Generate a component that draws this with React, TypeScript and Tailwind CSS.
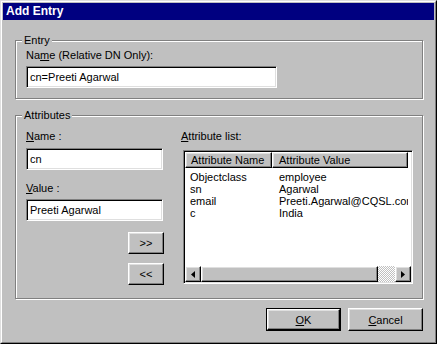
const raised =
  "border border-t-white border-l-white border-r-black border-b-black shadow-[inset_-1px_-1px_0_#808080,inset_1px_1px_0_#dfdfdf]";
const sunken =
  "border border-t-[#808080] border-l-[#808080] border-r-white border-b-white shadow-[inset_1px_1px_0_#000,inset_-1px_-1px_0_#dfdfdf]";
const etched = "border border-[#808080] shadow-[inset_1px_1px_0_#fff,1px_1px_0_#fff]";

function TextBox({ value, width }: { value: string; width: string }) {
  return (
    <div className={`${sunken} ${width} h-[22px] bg-white flex items-center pl-[3px] leading-[14px]`}>
      {value}
    </div>
  );
}

function Arrow({ dir }: { dir: "left" | "right" }) {
  return (
    <svg width="4" height="7" viewBox="0 0 4 7">
      {dir === "left" ? <path d="M4 0 L0 3.5 L4 7 Z" fill="#000" /> : <path d="M0 0 L4 3.5 L0 7 Z" fill="#000" />}
    </svg>
  );
}

function AttributeList() {
  const rows = [
    ["Objectclass", "employee"],
    ["sn", "Agarwal"],
    ["email", "Preeti.Agarwal@CQSL.com"],
    ["c", "India"],
  ];
  return (
    <div className={`${sunken} w-[230px] h-[134px] ml-[2px] p-[1px] bg-white flex flex-col`}>
      <div className="flex h-[16px] leading-[14px] bg-white">
        <div className={`${raised} w-[87px] bg-[#c0c0c0] pl-[5px] whitespace-nowrap overflow-hidden`}>Attribute Name</div>
        <div className={`${raised} w-[136px] bg-[#c0c0c0] pl-[6px] whitespace-nowrap overflow-hidden`}>Attribute Value</div>
      </div>
      <div className="flex-1 pt-[3px] bg-white">
        {rows.map(([name, value]) => (
          <div key={name} className="flex h-[12px] leading-[12px] whitespace-nowrap">
            <div className="w-[87px] pl-[5px]">{name}</div>
            <div className="w-[136px] pl-[7px] overflow-hidden">{value}</div>
          </div>
        ))}
      </div>
      <div className="flex h-[16px] bg-white">
        <div className={`${raised} w-[16px] bg-[#c0c0c0] flex items-center justify-center`}>
          <Arrow dir="left" />
        </div>
        <div className={`${raised} w-[177px] bg-[#c0c0c0]`} />
        <div className="flex-1 bg-[repeating-conic-gradient(#c0c0c0_0%_25%,#ffffff_0%_50%)] bg-[length:2px_2px]" />
        <div className={`${raised} w-[16px] bg-[#c0c0c0] flex items-center justify-center`}>
          <Arrow dir="right" />
        </div>
      </div>
    </div>
  );
}

function App(): JSX.Element {
  return (
    <div className="w-[437px] h-[344px] bg-[#c0c0c0] border border-t-[#dfdfdf] border-l-[#dfdfdf] border-r-black border-b-black font-['Liberation_Sans',Arial,sans-serif] text-[11px] text-black">
      <div className="w-full h-full border border-t-white border-l-white border-r-[#808080] border-b-[#808080] p-[1px] flex flex-col">
        <div className="h-[17px] bg-[#000080] text-white font-bold text-[12px] leading-[17px] pl-[3px]">Add Entry</div>

        <fieldset className={`${etched} ml-[12px] mt-[13px] w-[408px]`}>
          <legend className="ml-[6px] px-[2px] bg-[#c0c0c0] leading-[14px]">Entry</legend>
          <div className="pl-[10px] pt-[1px] pb-[10px]">
            <div className="leading-[14px]">
              Na<u>m</u>e (Relative DN Only):
            </div>
            <div className="mt-[4px]">
              <TextBox value="cn=Preeti Agarwal" width="w-[251px]" />
            </div>
          </div>
        </fieldset>

        <fieldset className={`${etched} ml-[12px] mt-[9px] w-[408px]`}>
          <legend className="ml-[6px] px-[2px] bg-[#c0c0c0] leading-[14px]">Attributes</legend>
          <div className="flex pl-[10px] pt-[7px] pb-[13px]">
            <div className="w-[138px] flex flex-col">
              <div className="leading-[14px]">
                <u>N</u>ame :
              </div>
              <div className="mt-[5px]">
                <TextBox value="cn" width="w-[137px]" />
              </div>
              <div className="leading-[14px] mt-[11px]">
                <u>V</u>alue :
              </div>
              <div className="mt-[4px]">
                <TextBox value="Preeti Agarwal" width="w-[137px]" />
              </div>
              <div className="flex flex-col items-end mt-[11px] gap-[9px]">
                <button className={`${raised} w-[36px] h-[22px] bg-[#c0c0c0] leading-[14px]`}>&gt;&gt;</button>
                <button className={`${raised} w-[36px] h-[22px] bg-[#c0c0c0] leading-[14px]`}>&lt;&lt;</button>
              </div>
            </div>
            <div className="ml-[17px] flex flex-col">
              <div className="leading-[14px]">
                <u>A</u>ttribute list:
              </div>
              <div className="mt-[7px]">
                <AttributeList />
              </div>
            </div>
          </div>
        </fieldset>

        <div className="flex justify-end gap-[7px] mt-[9px] pr-[11px]">
          <button className="w-[75px] h-[23px] border border-black">
            <div className={`${raised} w-full h-full bg-[#c0c0c0] flex items-center justify-center leading-[14px]`}>
              <span>
                <u>O</u>K
              </span>
            </div>
          </button>
          <button className={`${raised} w-[75px] h-[23px] bg-[#c0c0c0] flex items-center justify-center leading-[14px]`}>
            <span>
              <u>C</u>ancel
            </span>
          </button>
        </div>
      </div>
    </div>
  );
}

export default App;
